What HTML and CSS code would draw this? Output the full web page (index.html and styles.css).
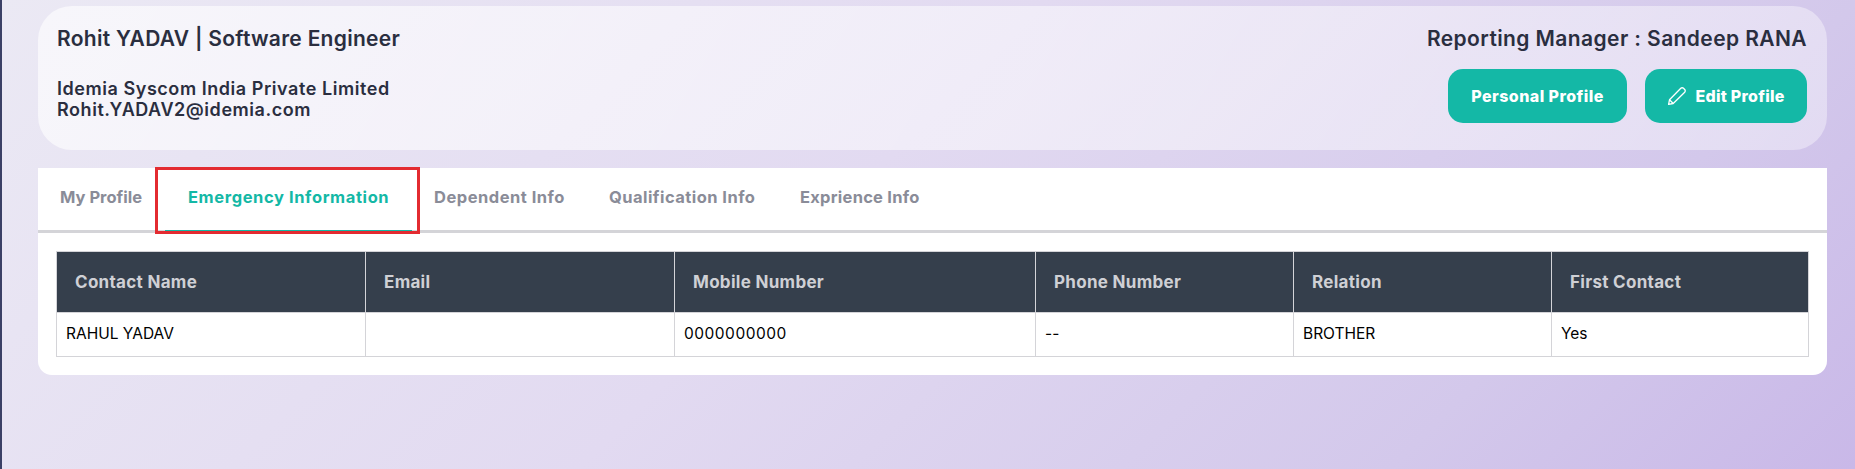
FILE: index.html
```html
<!DOCTYPE html>
<html lang="en">
<head>
<meta charset="utf-8">
<title>Emergency Information</title>
<link rel="stylesheet" href="styles.css">
</head>
<body>
<main class="page">
  <header class="hero">
    <div class="hero-left">
      <h1 class="name">Rohit YADAV | Software Engineer</h1>
      <p class="org">Idemia Syscom India Private Limited<br>Rohit.YADAV2@idemia.com</p>
    </div>
    <div class="hero-right">
      <h2 class="manager">Reporting Manager : Sandeep RANA</h2>
      <div class="actions">
        <button class="btn btn-personal">Personal Profile</button>
        <button class="btn btn-edit">
          <svg class="pencil" viewBox="0 0 20 20" width="20" height="20" fill="none" stroke="#fff" stroke-width="1.3" stroke-linejoin="round"><path d="M1.6 18.4l.9-4.6L13.8 2.3a1.9 1.9 0 0 1 2.7 0l1.2 1.2a1.9 1.9 0 0 1 0 2.7L6.2 17.5z"/><path d="M2.5 13.8l3.7 3.7"/></svg>
          Edit Profile
        </button>
      </div>
    </div>
  </header>
  <section class="card">
    <nav class="tabs">
      <a class="tab tab-1">My Profile</a>
      <a class="tab tab-2 active">Emergency Information</a>
      <a class="tab tab-3">Dependent Info</a>
      <a class="tab tab-4">Qualification Info</a>
      <a class="tab tab-5">Exprience Info</a>
      <span class="highlight"></span>
    </nav>
    <div class="table-wrap">
      <table class="grid">
        <colgroup>
          <col class="c-wide"><col class="c-wide"><col class="c-mobile"><col class="c-narrow"><col class="c-narrow"><col class="c-last">
        </colgroup>
        <thead>
          <tr><th>Contact Name</th><th>Email</th><th>Mobile Number</th><th>Phone Number</th><th>Relation</th><th>First Contact</th></tr>
        </thead>
        <tbody>
          <tr><td>RAHUL YADAV</td><td></td><td class="num">0000000000</td><td>--</td><td>BROTHER</td><td>Yes</td></tr>
        </tbody>
      </table>
    </div>
  </section>
</main>
</body>
</html>
```
FILE: styles.css
```css
* { box-sizing: border-box; }
html, body { margin: 0; height: 100%; }
body {
  font-family: "Inter", "Open Sans", sans-serif;
  background: linear-gradient(135deg, #ebe9f4 0%, #e2daf1 45%, #d3c8eb 80%, #c9b8e8 100%);
  border-left: 2px solid #3b4066;
  color: #2a2e3f;
  overflow: hidden;
}
.page { padding: 6px 28px 0 36px; }
.hero {
  height: 144px;
  padding: 19px 20px 0 19px;
  display: flex;
  justify-content: space-between;
  border-radius: 34px;
  background: linear-gradient(120deg, rgba(255,255,255,.62), rgba(255,255,255,.38));
}
.name, .manager { margin: 0; font-size: 21px; line-height: 27px; font-weight: 600; }
.name { letter-spacing: .28px; }
.manager { letter-spacing: .4px; }
.org { margin: 26px 0 0; font-size: 18px; line-height: 21px; font-weight: 600; letter-spacing: .55px; }
.hero-right { display: flex; flex-direction: column; align-items: flex-end; }
.actions { display: flex; gap: 18px; margin-top: 17px; }
.btn {
  height: 54px;
  border: 0;
  border-radius: 15px;
  background: #14b8a6;
  color: #fff;
  font: 800 16px "Inter", sans-serif;
  letter-spacing: .45px;
  display: flex;
  align-items: center;
  justify-content: center;
}
.btn-personal { width: 179px; }
.btn-edit { width: 162px; gap: 8px; letter-spacing: .25px; }
.pencil { flex: none; }
.card { margin-top: 18px; height: 207px; background: #fff; border-radius: 0 0 14px 14px; }
.tabs {
  position: relative;
  height: 65px;
  display: flex;
  border-bottom: 3px solid #d4d4d8;
}
.tab {
  display: block;
  height: 65px;
  padding-top: 19px;
  font-size: 16.5px;
  line-height: 20px;
  font-weight: 700;
  letter-spacing: .25px;
  color: #8a8c98;
  white-space: nowrap;
}
.tab-1 { margin-left: 22px; width: 128px; letter-spacing: 0; }
.tab-2 { width: 247px; color: #14b8a6; border-bottom: 3px solid #14b8a6; margin-left: -23px; padding-left: 23px; letter-spacing: .6px; }
.tab-3 { width: 175px; margin-left: 22px; letter-spacing: .5px; }
.tab-4 { width: 191px; letter-spacing: .45px; }
.tab-5 { width: 140px; }
.highlight {
  position: absolute;
  left: 117px;
  top: -1px;
  width: 265px;
  height: 67px;
  border: 3px solid #e32b31;
  pointer-events: none;
}
.table-wrap { padding: 18px 18px 0; }
.grid {
  width: 1753px;
  table-layout: fixed;
  border-collapse: separate;
  border-spacing: 0;
  border-top: 1px solid #d4d4d8;
  border-left: 1px solid #d4d4d8;
}
.c-wide { width: 309px; }
.c-mobile { width: 361px; }
.c-narrow { width: 258px; }
.c-last { width: 257px; }
th {
  height: 61px;
  padding: 0 0 1px 18px;
  text-align: left;
  background: #353f4c;
  border-right: 1px solid #d4d4d8;
  border-bottom: 1px solid #d4d4d8;
  color: #cfd0d5;
  font-size: 17px;
  font-weight: 700;
  letter-spacing: .3px;
}
td {
  height: 44px;
  padding: 0 0 2px 9px;
  border-right: 1px solid #d4d4d8;
  border-bottom: 1px solid #d4d4d8;
  font-size: 15.5px;
  color: #000;
}
.num { letter-spacing: .5px; }
```
